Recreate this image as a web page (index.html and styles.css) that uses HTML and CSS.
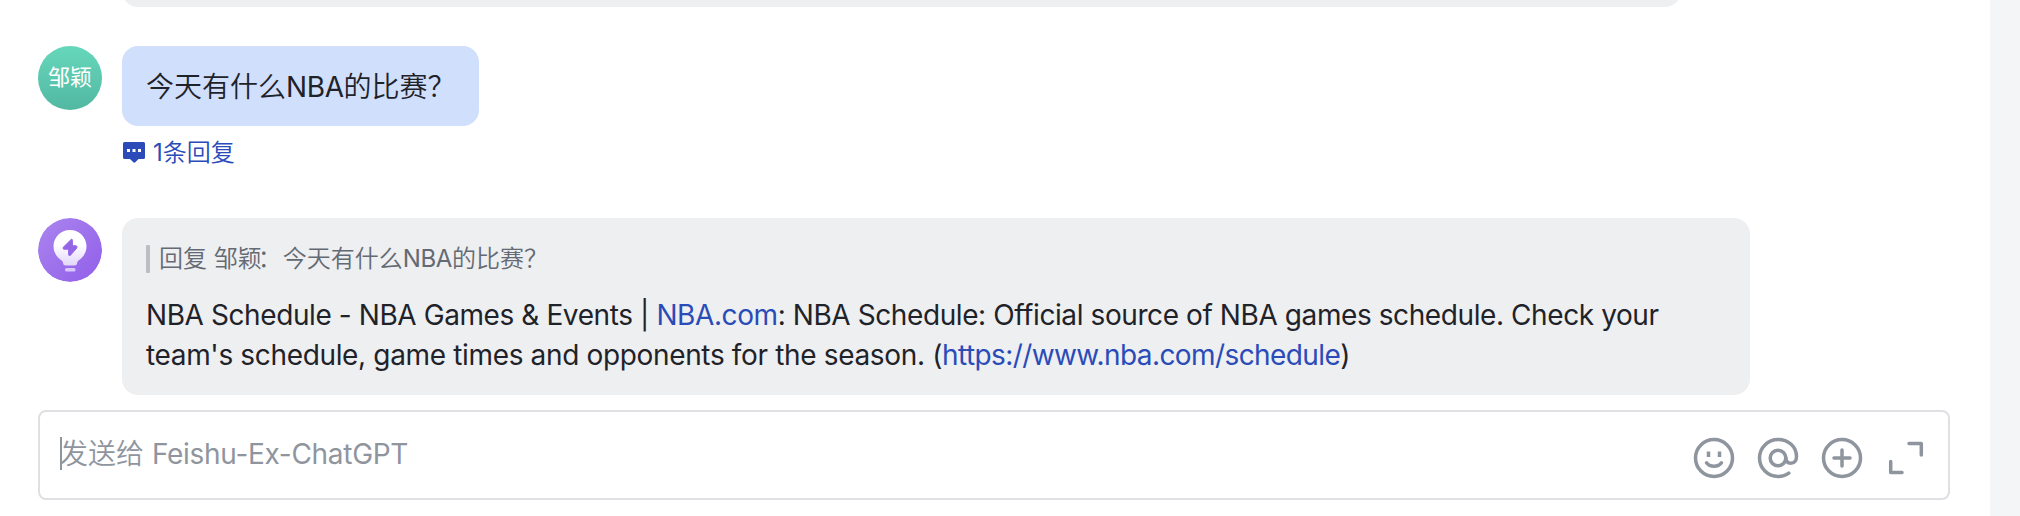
FILE: index.html
```html
<!DOCTYPE html>
<html lang="zh-CN">
<head>
<meta charset="utf-8">
<title>Feishu-Ex-ChatGPT</title>
<link rel="stylesheet" href="styles.css">
</head>
<body>
<div class="app">
  <main class="chat">
    <div class="previous"></div>

    <section class="message first">
      <div class="avatar user">邹颖</div>
      <div class="content">
        <div class="bubble mine">今天有什么<span class="nba">NBA</span>的比赛？</div>
        <a class="replies">
          <svg width="22" height="21" viewBox="0 0 22 21"><path d="M1.5 0h19A1.5 1.5 0 0 1 22 1.500V15.500A1.500 1.500 0 0 1 20.500 17H15.500L12.300 20.300Q11.300 21.200 10.300 20.300L7 17H1.500A1.500 1.500 0 0 1 0 15.500V1.500A1.500 1.500 0 0 1 1.500 0Z" fill="#2a4bb8"/><path d="M4 7h3v3H4zM9.500 7h3v3h-3zM15 7h3v3h-3z" fill="#fff"/></svg>
          <span><span class="count">1</span>条回复</span>
        </a>
      </div>
    </section>

    <section class="message second">
      <svg class="avatar" viewBox="0 0 64 64">
        <defs>
          <linearGradient id="purple" x1="0" y1="0" x2="1" y2="1"><stop offset="0.1" stop-color="#a881ee"/><stop offset="0.9" stop-color="#9462ea"/></linearGradient>
          <linearGradient id="glow" x1="0" y1="0" x2="0" y2="1"><stop offset="0.4" stop-color="#fff"/><stop offset="1" stop-color="#e3d6fb"/></linearGradient>
        </defs>
        <circle cx="32" cy="32" r="32" fill="url(#purple)"/>
        <path d="M32 12c-9.300 0-16.500 7.200-16.500 16.300 0 5.900 3 10.700 7.500 13.600 1.500 1 2 2.100 2.200 3.600.2 1.300.9 2 2.200 2h9.400c1.300 0 2-.7 2.200-2 .2-1.500.7-2.600 2.200-3.600 4.400-2.900 7.300-7.700 7.300-13.600C48.500 19.200 41.300 12 32 12Z" fill="url(#glow)"/>
        <path d="M33.200 21.400 25.300 29.200Q24.500 31 26 31.200H30.600V36.700Q31 38.200 32.300 37.400L38.700 30.200Q39.600 28.500 38.200 27.800H34.400V22.300Q34.300 20.800 33.200 21.400Z" fill="#9565e8" stroke="#9565e8" stroke-linejoin="round"/>
        <rect x="27" y="50" width="10.500" height="3.500" rx="1.500" fill="#d9c6fa"/>
      </svg>
      <div class="bubble theirs">
        <div class="quote">回复 邹颖<span class="colon">：</span>今天有什么<span class="nba">NBA</span>的比赛？</div>
        <p class="text"><span class="line">NBA Schedule - NBA Games &amp; Events | <a>NBA.com</a>: NBA Schedule: Official source of NBA games schedule. Check your</span> <span class="line second-line">team's schedule, game times and opponents for the season. (<a class="url">https://www.nba.com/schedule</a>)</span></p>
      </div>
    </section>

    <div class="composer">
      <i class="caret"></i>
      <div class="placeholder">发送给 <span class="name">Feishu-Ex-ChatGPT</span></div>
      <div class="tools">
        <svg width="42" height="42" viewBox="-21 -21 42 42"><circle r="18.500"/><path d="M-7.500 4.800Q-5 8.300 0 8.300T7.500 4.800"/><path d="M-5.500-6.500v5.500M5.500-6.500v5.500" stroke-linecap="butt"/></svg>
        <svg width="42" height="42" viewBox="-21 -21 42 42"><circle r="7.800"/><path d="M7.800-.5C7.800 3 9.500 5.300 12.800 5.300 16.800 5.300 18.500 2 18.500-1.500 18.500-11.500 10.300-18.500 0-18.500A18.500 18.500 0 0 0 0 18.500C4 18.500 8 17.300 10.800 15.200"/></svg>
        <svg width="42" height="42" viewBox="-21 -21 42 42"><circle r="18.500"/><path d="M-8 0H8M0-8V8" /></svg>
        <svg width="42" height="42" viewBox="-21 -21 42 42"><path d="M3-14.500H15.300V-3M-15.300 3.500V14.500H-4" stroke-linejoin="round"/></svg>
      </div>
    </div>
  </main>
  <aside class="side"></aside>
</div>
</body>
</html>
```
FILE: styles.css
```css
* { box-sizing: border-box; }
body { margin: 0; font-family: Inter, "Noto Sans CJK SC", sans-serif; color: #1f2329; background: #fff; }
.app { display: flex; width: 2020px; height: 516px; overflow: hidden; }
.chat { flex: 1; padding: 0 40px 0 38px; }
.side { width: 30px; background: #f4f5f7; }
.previous { height: 7px; width: 1559px; margin-left: 84px; overflow: hidden; display: flex; align-items: flex-end; }
.previous::before { content: ""; width: 100%; height: 40px; flex: none; border-radius: 16px; background: #eeeff1; }
.message { display: flex; gap: 20px; align-items: flex-start; }
.first { margin-top: 39px; height: 172px; }
.avatar { width: 64px; height: 64px; flex: none; border-radius: 50%; }
.user { background: linear-gradient(#66d7bb, #52b8a2); color: #fff; font-size: 22px; line-height: 63px; text-align: center; }
.bubble { border-radius: 16px; }
.mine { width: 357px; height: 80px; padding: 21px 24px 19px; background: #d0dffc; font-size: 28px; font-weight: 350; line-height: 40px; white-space: nowrap; }
.nba { font-weight: 400; letter-spacing: -0.4px; }
.replies { display: flex; gap: 8px; margin: 11px 0 0 1px; height: 32px; align-items: flex-start; color: #2a4bb8; font-size: 24px; font-weight: 350; line-height: 32px; }
.replies svg { margin-top: 5px; }
.count { font-weight: 400; }
.theirs { width: 1628px; height: 177px; padding: 24px; background: #eeeff1; }
.quote { display: flex; align-items: center; height: 34px; color: #646a73; font-size: 24px; font-weight: 350; line-height: 34px; white-space: pre; }
.quote::before { content: ""; width: 4px; height: 28px; margin-right: 9px; border-radius: 1px; background: #bbbfc4; }
.colon { margin-left: -4px; letter-spacing: 1px; }
.text { margin: 19px 0 0; font-size: 28px; line-height: 40px; letter-spacing: -0.41px; }
.text a { color: #2a4bb8; }
.line { display: block; white-space: nowrap; width: max-content; }
.second-line { letter-spacing: -0.345px; }
.url { letter-spacing: -0.59px; }
.composer { display: flex; width: 1912px; height: 90px; margin-top: 15px; padding: 0 21px 0 20px; border: 2px solid #dee0e3; border-radius: 8px; color: #8f959e; }
.caret { width: 2px; height: 33px; margin: 25px -2px 0 0; background: #8f959e; }
.placeholder { font-size: 28px; font-weight: 350; line-height: 40px; margin-top: 22px; white-space: nowrap; }
.name { font-weight: 400; letter-spacing: -0.3px; }
.tools { display: flex; gap: 22px; margin: 25px 0 0 auto; }
.tools svg { fill: none; stroke: #8f959e; stroke-width: 3.500; stroke-linecap: round; }
```
